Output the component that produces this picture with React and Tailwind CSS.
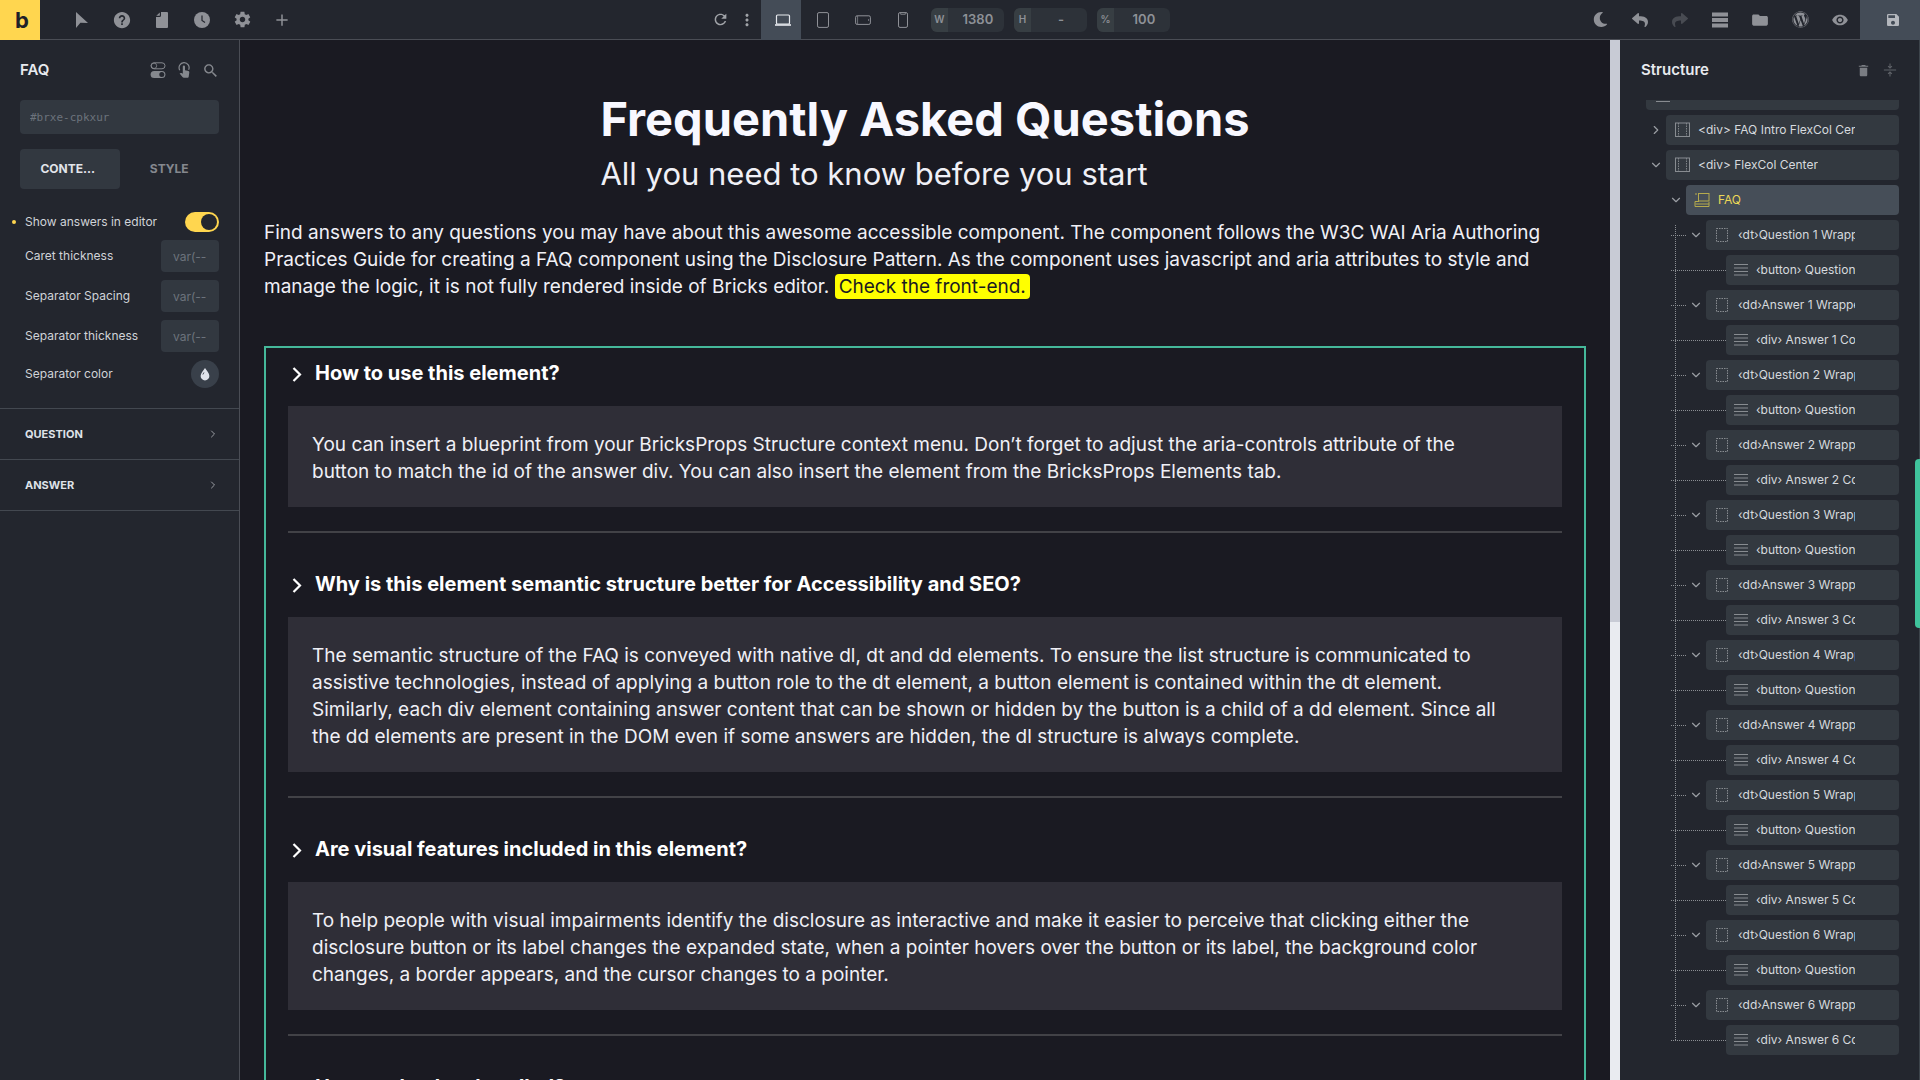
import React from "react";
import {
  IoMdHelpCircle, IoMdSettings, IoMdAdd, IoMdRefresh,
  IoMdFolder, IoMdEye, IoMdSave, IoMdSearch, IoMdTrash, IoMdMore,
} from "react-icons/io";
import { FaWordpress, FaReply, FaShare, FaMoon } from "react-icons/fa";
import { ChevronDown, ChevronRight } from "lucide-react";

const Svg = ({ size = 16, children, className }) => (
  <svg width={size} height={size} viewBox="0 0 16 16" fill="none" className={className} aria-hidden="true">
    {children}
  </svg>
);

const CursorIcon = () => (
  <Svg><path d="M2 0v16l4.400-5.200L14 11z" fill="currentColor" /></Svg>
);
const PageIcon = () => (
  <Svg>
    <path d="M7 0h6a1 1 0 0 1 1 1v14a1 1 0 0 1-1 1H3a1 1 0 0 1-1-1V5h3.500A1.500 1.500 0 0 0 7 3.500z" fill="currentColor" />
    <path d="M5.800.4v2.900a.5.5 0 0 1-.5.5H2.300z" fill="currentColor" />
  </Svg>
);
const ClockIcon = () => (
  <Svg>
    <circle cx="8" cy="8" r="8" fill="currentColor" />
    <path d="M8 3.500V8.500l3 2" stroke="#23262e" strokeWidth="1.200" />
  </Svg>
);
const LaptopIcon = () => (
  <Svg>
    <rect x="1.500" y="3" width="13" height="9" rx="1" stroke="currentColor" strokeWidth="1.200" />
    <path d="M0 13h16" stroke="currentColor" strokeWidth="1.600" />
  </Svg>
);
const TabletIcon = () => (
  <Svg><rect x="2.500" y=".6" width="11" height="14.800" rx="1.500" stroke="currentColor" /></Svg>
);
const LandscapeIcon = () => (
  <Svg>
    <rect x=".6" y="3.800" width="14.800" height="8.600" rx="1.500" stroke="currentColor" />
    <path d="M2.600 4v8M13.600 7v2" stroke="currentColor" strokeWidth=".7" />
  </Svg>
);
const PhoneIcon = () => (
  <Svg>
    <rect x="3.500" y=".6" width="9" height="14.800" rx="1.500" stroke="currentColor" />
    <path d="M5.700 1v1.300h4.600V1" stroke="currentColor" strokeWidth=".8" />
  </Svg>
);
const BarsIcon = () => (
  <Svg><path d="M0 .5h16v4H0zM0 6h16v4H0zM0 11.500h16v4H0z" fill="currentColor" /></Svg>
);
const SwitchesIcon = () => (
  <Svg>
    <rect x="1" y=".8" width="14" height="6" rx="3" stroke="currentColor" />
    <circle cx="4" cy="3.800" r="2.700" stroke="currentColor" strokeWidth=".8" />
    <rect x=".6" y="9" width="14.800" height="7" rx="3.500" fill="currentColor" />
    <circle cx="11.800" cy="12.500" r="2.500" fill="#23262e" />
  </Svg>
);
const TapIcon = () => (
  <Svg>
    <path d="M3.800 8.200A5 5 0 1 1 12.600 7.800" stroke="currentColor" strokeWidth="1.200" />
    <path d="M6.800 4.500a1.100 1.100 0 0 1 2.200 0v3.700l3.400.9c.7.2 1 .7.9 1.400l-.6 4.200c-.1.700-.6 1.100-1.200 1.100H7.800c-.5 0-.8-.2-1.100-.5L3.600 11.600c.5-.8 1.400-.8 2-.5l1.200.6z" fill="currentColor" />
  </Svg>
);
const DropIcon = () => (
  <Svg size={14}>
    <path d="M8 1C10 4 13 7 13 10.300A5 5 0 0 1 3 10.300C3 7 6 4 8 1z" fill="#dfe2ea" />
    <path d="M6.800 6.200 5.600 8.600" stroke="#39404a" strokeWidth="1" />
  </Svg>
);
const CollapseIcon = () => (
  <Svg size={14}>
    <path d="M1 8h14M8 .5v5M5.800 3.500 8 5.700l2.200-2.200M8 15.500v-5M5.800 12.500 8 10.300l2.200 2.200" stroke="currentColor" strokeWidth="1.200" />
  </Svg>
);
const SectionIcon = () => (
  <Svg>
    <rect x="1.500" y="1" width="14" height="13.500" stroke="currentColor" />
    <path d="M4.500 1v13.500M12.500 1v13.500" stroke="currentColor" strokeDasharray="1.500 1" strokeWidth=".9" />
  </Svg>
);
const FaqIcon = () => (
  <Svg>
    <rect x="4.500" y="1.500" width="10.500" height="7.500" stroke="currentColor" />
    <path d="M1 2h2M1 9.500h4M1.500 12h13.500M1 14.500h14M1 9.500v5M15 10v4.500" stroke="currentColor" />
  </Svg>
);
const BlockIcon = () => (
  <svg width="12" height="14" viewBox="0 0 12 14" fill="none" aria-hidden="true">
    <rect x=".5" y=".5" width="11" height="13" stroke="currentColor" strokeDasharray="1.500 1" />
  </svg>
);
const LinesIcon = () => (
  <svg width="14" height="12" viewBox="0 0 14 12" aria-hidden="true">
    <path d="M0 .5h14M0 4h14M0 7.500h14M0 11h14" stroke="currentColor" />
  </svg>
);

const TopButton = ({ label, children, dim }) => (
  <button type="button" aria-label={label} className={`flex h-full w-10 items-center justify-center ${dim ? "text-[#484b52]" : "text-[#8f9197]"}`}>
    {children}
  </button>
);

const SizeField = ({ label, name, value }) => (
  <label className="flex h-6 w-[73px] items-center overflow-hidden rounded-md bg-[#2d3239] text-[#8d9197]">
    <span className="flex h-full w-6 items-center justify-center bg-[#373e43] text-[10px] font-semibold">{label}</span>
    <input aria-label={name} defaultValue={value} className="w-full min-w-0 bg-transparent pl-1 text-center text-[13px] font-semibold outline-none" />
  </label>
);

function TopBar() {
  return (
    <header className="flex h-10 shrink-0 justify-between border-b border-[#4a4d55] bg-[#23262e]">
      <div className="flex">
        <a href="#home" aria-label="Bricks" className="mr-[22px] -mb-px flex w-10 items-center justify-center bg-[#ffd64f] pl-1 text-[22px] leading-none font-bold text-[#1f2129]">b</a>
        <TopButton label="Select"><CursorIcon /></TopButton>
        <TopButton label="Help"><IoMdHelpCircle size={20} /></TopButton>
        <TopButton label="Pages"><PageIcon /></TopButton>
        <TopButton label="History"><ClockIcon /></TopButton>
        <TopButton label="Settings"><IoMdSettings size={19} /></TopButton>
        <TopButton label="Add"><IoMdAdd size={18} /></TopButton>
      </div>
      <div className="flex items-center pr-1">
        <button type="button" aria-label="Reload" className="flex w-6 justify-center text-[#a0a3a8]"><IoMdRefresh size={17} /></button>
        <button type="button" aria-label="More" className="flex w-7 justify-center text-[#a0a3a8]"><IoMdMore size={20} /></button>
        <button type="button" aria-label="Desktop" className="mr-0.5 -mb-px flex h-10 w-10 items-center justify-center bg-[#444c57] pl-1 text-[#e6e9ee]"><LaptopIcon /></button>
        <TopButton label="Tablet portrait"><TabletIcon /></TopButton>
        <TopButton label="Mobile landscape"><LandscapeIcon /></TopButton>
        <TopButton label="Mobile portrait"><PhoneIcon /></TopButton>
        <div className="ml-2 flex gap-2.5">
          <SizeField label="W" name="Width" value="1380" />
          <SizeField label="H" name="Height" value="-" />
          <SizeField label="%" name="Zoom" value="100" />
        </div>
      </div>
      <div className="flex">
        <TopButton label="Dark mode"><FaMoon size={15} /></TopButton>
        <TopButton label="Undo"><FaReply size={16} /></TopButton>
        <TopButton label="Redo" dim><FaShare size={16} /></TopButton>
        <TopButton label="Structure"><BarsIcon /></TopButton>
        <TopButton label="Templates"><IoMdFolder size={18} /></TopButton>
        <TopButton label="WordPress"><FaWordpress size={17} /></TopButton>
        <TopButton label="Preview"><IoMdEye size={18} /></TopButton>
        <button type="button" aria-label="Save" className="-mb-px flex w-15 items-center justify-center bg-[#444c57] pl-1.5 text-[#b4b7bd]"><IoMdSave size={16} /></button>
      </div>
    </header>
  );
}

const VarRow = ({ id, label }) => (
  <div className="flex h-8 items-center justify-between">
    <label htmlFor={id}>{label}</label>
    <input id={id} placeholder="var(--" className="h-8 w-[58px] rounded bg-[#323840] px-3 text-xs text-[#dfe2e8] outline-none placeholder:text-[#6c737c]" />
  </div>
);

const Group = ({ children }) => (
  <button type="button" className="flex h-[51px] items-center justify-between border-b border-[#434850] pr-5 pl-[25px] text-[11px] font-bold text-[#dfe2e8]">
    {children}
    <ChevronRight size={12} className="text-[#9a9da3]" />
  </button>
);

function SettingsPanel() {
  return (
    <aside className="flex w-60 shrink-0 flex-col border-r border-[#4a4d55] bg-[#23262e] text-xs text-[#d0d3d8]">
      <div className="flex h-15 items-center justify-between px-5">
        <h2 className="text-[15px] font-semibold text-[#e8eaee]">FAQ</h2>
        <div className="flex gap-2.5 text-[#85888e]">
          <button type="button" aria-label="Conditions"><SwitchesIcon /></button>
          <button type="button" aria-label="Interactions"><TapIcon /></button>
          <button type="button" aria-label="Search"><IoMdSearch size={17} /></button>
        </div>
      </div>
      <div className="flex flex-col px-5">
        <input aria-label="Element ID" placeholder="#brxe-cpkxur" className="h-[34px] rounded bg-[#323840] px-2.5 font-['DejaVu_Sans_Mono',monospace] text-[11px] outline-none placeholder:text-[#6c737c]" />
        <div className="mt-[15px] grid h-10 grid-cols-2 text-xs font-bold">
          <button type="button" className="rounded bg-[#323840] pr-1 text-[#e2e5ea]">CONTE…</button>
          <button type="button" className="text-[#85888e]">STYLE</button>
        </div>
      </div>
      <div className="mt-5 flex flex-col gap-2 pr-5 pl-[25px]">
        <div className="-mb-px -ml-[13px] flex h-6 items-center justify-between pt-0.5">
          <label htmlFor="show" className="flex items-center gap-[9px]">
            <span className="size-1 rounded-full bg-[#ffd64f]" />
            Show answers in editor
          </label>
          <input id="show" type="checkbox" role="switch" defaultChecked className="h-5 w-[34px] appearance-none rounded-full bg-[#ffd64f] p-0.5 pl-4 before:block before:size-4 before:rounded-full before:bg-[#23262e]" />
        </div>
        <VarRow id="caret" label="Caret thickness" />
        <VarRow id="spacing" label="Separator Spacing" />
        <VarRow id="thick" label="Separator thickness" />
        <div className="flex h-7 items-center justify-between">
          <span>Separator color</span>
          <button type="button" aria-label="Separator color" className="flex size-7 items-center justify-center rounded-full bg-[#39404a]"><DropIcon /></button>
        </div>
      </div>
      <div className="mt-5 flex flex-col border-t border-[#434850]">
        <Group>QUESTION</Group>
        <Group>ANSWER</Group>
      </div>
    </aside>
  );
}

const faqs = [
  {
    q: "How to use this element?",
    a: "You can insert a blueprint from your BricksProps Structure context menu. Don’t forget to adjust the aria-controls attribute of the button to match the id of the answer div. You can also insert the element from the BricksProps Elements tab.",
  },
  {
    q: "Why is this element semantic structure better for Accessibility and SEO?",
    a: "The semantic structure of the FAQ is conveyed with native dl, dt and dd elements. To ensure the list structure is communicated to assistive technologies, instead of applying a button role to the dt element, a button element is contained within the dt element. Similarly, each div element containing answer content that can be shown or hidden by the button is a child of a dd element. Since all the dd elements are present in the DOM even if some answers are hidden, the dl structure is always complete.",
  },
  {
    q: "Are visual features included in this element?",
    a: "To help people with visual impairments identify the disclosure as interactive and make it easier to perceive that clicking either the disclosure button or its label changes the expanded state, when a pointer hovers over the button or its label, the background color changes, a border appears, and the cursor changes to a pointer.",
  },
  { q: "How are hashes handled?" },
];

function Canvas() {
  return (
    <main className="min-w-0 flex-1 overflow-hidden bg-[#1a1a22] px-6 text-[19px] leading-[27px] text-[#f0f0f6]">
      <div className="mx-auto mt-[49px] w-fit">
        <h1 className="text-[47px] leading-[60px] font-bold text-[#f8f8ff]">Frequently Asked Questions</h1>
        <p className="mt-[3px] text-[31px] leading-[44px]">All you need to know before you start</p>
      </div>
      <p className="mt-[23px]">
        Find answers to any questions you may have about this awesome accessible component. The component follows the W3C WAI Aria Authoring Practices Guide for creating a FAQ component using the Disclosure Pattern. As the component uses javascript and aria attributes to style and manage the logic, it is not fully rendered inside of Bricks editor.{" "}
        <mark className="rounded bg-[#ffff00] px-1 py-px text-[#1a1a21]">Check the front-end.</mark>
      </p>
      <dl className="mt-[46px] border-2 border-[#45b89a] px-[22px]">
        {faqs.map(({ q, a }) => (
          <React.Fragment key={q}>
            <dt>
              <button type="button" className="flex h-[50px] items-center gap-2 text-xl font-bold text-white">
                <svg width="19" height="20" viewBox="0 0 19 20" fill="none" aria-hidden="true">
                  <path d="M5.500 5l6.500 6.500-6.500 6.500" stroke="currentColor" strokeWidth="2.200" />
                </svg>
                {q}
              </button>
            </dt>
            {a && (
              <dd className="mt-2 mb-[26px] border-b-2 border-[#424247] pb-6">
                <div className="bg-[#2f2e37] pt-[25px] pr-14 pb-[22px] pl-6">{a}</div>
              </dd>
            )}
          </React.Fragment>
        ))}
      </dl>
    </main>
  );
}

const children = [1, 2, 3, 4, 5, 6].flatMap((n) => [
  { text: `‹dt›Question ${n} Wrapper` },
  { text: `‹button› Question ${n}`, leaf: true },
  { text: `‹dd›Answer ${n} Wrapper` },
  { text: `‹div› Answer ${n} Content`, leaf: true },
]);

const NodeBox = ({ icon, text, active, leaf }) => (
  <button type="button" className={`flex h-[30px] min-w-0 flex-1 items-center rounded pr-11 pl-2 text-left ${active ? "bg-[#464e58] text-[#ecd757]" : "bg-[#333940] text-[#d6d9de]"}`}>
    <span className={`flex shrink-0 ${leaf ? "w-[22px]" : "w-6"} ${active ? "text-[#b5aa4d]" : "text-[#888c91]"}`}>{icon}</span>
    <span className="overflow-hidden whitespace-nowrap">{text}</span>
  </button>
);

const Caret = ({ open }) => (
  <span className="flex w-5 shrink-0 justify-center text-[#9a9da3]">
    {open ? <ChevronDown size={14} /> : <ChevronRight size={14} />}
  </span>
);

function StructurePanel() {
  return (
    <aside className="relative flex w-75 shrink-0 flex-col border-r border-[#3d444b] bg-[#23262e] text-xs">
      <div className="flex h-15 shrink-0 items-center justify-between pr-[22px] pl-[21px]">
        <h2 className="text-[15px] font-semibold text-[#e8eaee]">Structure</h2>
        <div className="flex items-center gap-3 text-[#7a7d83]">
          <button type="button" aria-label="Delete"><IoMdTrash size={15} /></button>
          <button type="button" aria-label="Collapse" className="text-[#5f6268]"><CollapseIcon /></button>
        </div>
      </div>
      <div className="flex min-h-0 flex-1 flex-col overflow-hidden pr-5">
        <div className="ml-[26px] h-2.5 shrink-0 rounded-b bg-[#333940] pl-2.5">
          <div className="h-0.5 w-3.5 border-b border-[#888c91]" />
        </div>
        <ul className="mt-[5px] flex flex-col gap-[5px]">
          <li className="flex items-center pl-[26px]"><Caret /><NodeBox icon={<SectionIcon />} text="<div> FAQ Intro FlexCol Center" /></li>
          <li className="flex items-center pl-[26px]"><Caret open /><NodeBox icon={<SectionIcon />} text="<div> FlexCol Center" /></li>
          <li>
            <div className="flex items-center pl-[46px]"><Caret open /><NodeBox icon={<FaqIcon />} text="FAQ" active /></div>
            <ul className="relative mt-[5px] flex flex-col gap-[5px] pl-[51px] before:absolute before:top-[5px] before:bottom-[15px] before:left-[55px] before:border-l before:border-dotted before:border-[#8b8e93]">
              {children.map(({ text, leaf }) => (
                <li key={text} className="flex items-center">
                  <span className={`border-t border-dotted border-[#8b8e93] ${leaf ? "w-[55px]" : "w-[15px]"}`} />
                  {!leaf && <Caret open />}
                  <NodeBox leaf={leaf} icon={leaf ? <LinesIcon /> : <span className="pl-0.5"><BlockIcon /></span>} text={text} />
                </li>
              ))}
            </ul>
          </li>
        </ul>
      </div>
      <div className="absolute top-[419px] -right-px h-[169px] w-[5px] rounded-l bg-[#3fc39c]" />
    </aside>
  );
}

export default function App() {
  return (
    <div className="flex h-screen flex-col overflow-hidden bg-[#1a1a22] font-['Inter',sans-serif]">
      <TopBar />
      <div className="flex min-h-0 flex-1">
        <SettingsPanel />
        <Canvas />
        <div className="w-2.5 shrink-0 bg-[#e9ebf0]">
          <div className="h-[56%] bg-[#c8cbd5]" />
        </div>
        <StructurePanel />
      </div>
    </div>
  );
}
